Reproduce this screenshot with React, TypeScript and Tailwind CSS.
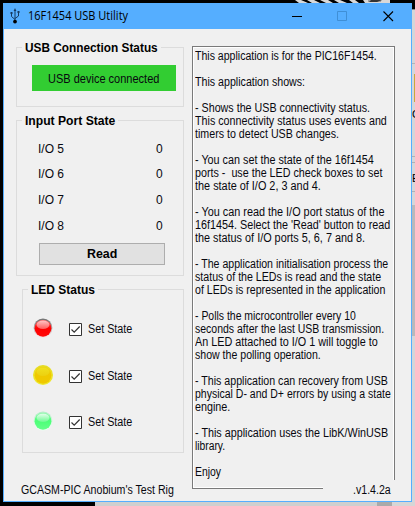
import { useLayoutEffect, useRef, useState } from 'react';
import type { ReactNode } from 'react';

/* One line of text condensed or widened to the given width. */
function Fit({ w, children }: { w: number; children: string }) {
  const ref = useRef<HTMLSpanElement>(null);
  const [scale, setScale] = useState(1);
  useLayoutEffect(() => {
    if (ref.current) setScale(w / ref.current.offsetWidth);
  }, [w]);
  return (
    <span className="block whitespace-pre" style={{ width: w }}>
      <span ref={ref} className="inline-block origin-left" style={{ transform: `scaleX(${scale})` }}>
        {children}
      </span>
    </span>
  );
}

function Group({ title, width, className, children }: { title: string; width: number; className: string; children: ReactNode }) {
  return (
    <section className={`relative border border-[#dcdcdc] ${className}`}>
      <h2 className="absolute -top-[8px] left-[5px] bg-[#f0f0f0] px-[3px] text-[12px] font-bold leading-[16px] text-black">
        <Fit w={width}>{title}</Fit>
      </h2>
      {children}
    </section>
  );
}

const lines: [string, number][] = [
  ['This application is for the PIC16F1454.', 182],
  ['', 0],
  ['This application shows:', 110],
  ['', 0],
  ['- Shows the USB connectivity status.', 175],
  ['This connectivity status uses events and', 192],
  ['timers to detect USB changes.', 144],
  ['', 0],
  ['- You can set the state of the 16f1454', 179],
  ['ports -  use the LED check boxes to set', 187],
  ['the state of I/O 2, 3 and 4.', 126],
  ['', 0],
  ['- You can read the I/O port status of the', 189],
  ["16f1454. Select the 'Read' button to read", 195],
  ['the status of I/O ports 5, 6, 7 and 8.', 170],
  ['', 0],
  ['- The application initialisation process the', 193],
  ['status of the LEDs is read and the state', 186],
  ['of LEDs is represented in the application', 190],
  ['', 0],
  ['- Polls the microcontroller every 10', 161],
  ['seconds after the last USB transmission.', 189],
  ['An LED attached to I/O 1 will toggle to', 183],
  ['show the polling operation.', 126],
  ['', 0],
  ['- This application can recovery from USB', 193],
  ['physical D- and D+ errors by using a state', 196],
  ['engine.', 35],
  ['', 0],
  ['- This application uses the LibK/WinUSB', 193],
  ['library.', 30],
  ['', 0],
  ['Enjoy', 26],
];

const leds = [
  { id: 'red', rim: '#777777', rim2: '#f6dcdc', top: '#ff5c5c', mid: '#ff0000', low: '#ff0808', shine: '#ffc4c4', r: 9.4 },
  { id: 'yellow', rim: '#e6dc22', rim2: '#eee82d', top: '#ecd010', mid: '#efc900', low: '#efc800', shine: '#f0e01e', r: 10 },
  { id: 'green', rim: '#b5eec7', rim2: '#ecfff2', top: '#6dfb92', mid: '#4dff78', low: '#65ff8a', shine: '#e4ffec', r: 9.4 },
];

function Led({ led }: { led: (typeof leds)[number] }) {
  return (
    <svg className="h-5 w-5" viewBox="0 0 20 20">
      <defs>
        <linearGradient id={`${led.id}-rim`} x1="0" y1="0" x2="0" y2="1">
          <stop offset="0.1" stopColor={led.rim} />
          <stop offset="0.9" stopColor={led.rim2} />
        </linearGradient>
        <linearGradient id={`${led.id}-body`} x1="0" y1="0" x2="0" y2="1">
          <stop offset="0" stopColor={led.top} />
          <stop offset="0.5" stopColor={led.mid} />
          <stop offset="1" stopColor={led.low} />
        </linearGradient>
        <linearGradient id={`${led.id}-shine`} x1="0" y1="0" x2="0" y2="1">
          <stop offset="0" stopColor={led.shine} />
          <stop offset="1" stopColor={led.top} />
        </linearGradient>
      </defs>
      <circle cx="10" cy="10" r={led.r} fill={`url(#${led.id}-rim)`} />
      <circle cx="10" cy="10.3" r="8.4" fill={`url(#${led.id}-body)`} />
      <ellipse cx="10" cy="6.800" rx="6.500" ry="4.200" fill={`url(#${led.id}-shine)`} />
    </svg>
  );
}

export default function App() {
  return (
    <div className="flex h-[506px] w-[415px] flex-col overflow-hidden bg-black font-['Liberation_Sans',Arial,sans-serif] text-[12px] text-[#08080f]">
      <div className="flex h-[3px] shrink-0">
        <svg className="ml-[295px] h-[3px] w-[96px]" viewBox="0 0 96 3">
          <path d="M0 0h6l7 3H4zM12 0h7l6 3h-8zM25 0h8l5 3h-7zM39 0h6l7 3h-8zM54 0h6l4 3h-6zM68 0h8l-2 2h8l5-2h8v3H70z" fill="#d8d8d8" />
          <path d="M73 .5h13v1H73z" fill="#666" />
        </svg>
      </div>
      <div className="flex h-[499px] shrink-0 pl-[3px]">
        <main className="flex h-[499px] w-[409px] flex-col border border-t-0 border-[#55aeff] bg-[#f0f0f0]">
          <header className="-mx-px flex h-[26px] shrink-0 items-center bg-[#55aeff] text-black">
            <svg className="ml-[7px] h-[18px] w-[10px]" viewBox="0 0 10 18" fill="none" stroke="#173b61" strokeWidth="1">
              <path d="M5 3v12M1.5 6v3.5L5 12.5M8.5 5.5V9L5 11.5" />
              <path d="M5 1L3.6 4h2.8z" fill="#173b61" stroke="none" />
              <path d="M.5 5h2v2h-2zM7.5 4h2v2h-2z" fill="#173b61" stroke="none" />
              <circle cx="5" cy="14.6" r="1.9" fill="#000" stroke="none" />
            </svg>
            <h1 className="ml-[8px] font-['Open_Sans','Noto_Sans',sans-serif] text-[12px] leading-[18px]">
              <Fit w={100}>16F1454 USB Utility</Fit>
            </h1>
            <svg className="ml-auto mr-[17px] h-[12px] w-[104px]" viewBox="0 0 104 12" fill="none">
              <path d="M1 6.5h10" stroke="#000" />
              <path d="M46.500 1.500h9v9h-9z" stroke="#3f8fd6" />
              <path d="M92.500 1.500l9.500 9.500M102 1.500l-9.500 9.500" stroke="#000" strokeWidth="1.100" />
            </svg>
          </header>
          <div className="flex pl-[12px] pt-[17px]">
            <div className="flex w-[168px] flex-col">
              <Group title="USB Connection Status" width={133} className="mt-px h-[60px] px-[15px] pt-[17px]">
                <div className="flex h-[26px] w-[144px] items-center bg-[#32cd32] pl-[16px] pt-px">
                  <Fit w={111}>USB device connected</Fit>
                </div>
              </Group>
              <Group title="Input Port State" width={90} className="mt-[13px] h-[156px]">
                <div className="flex flex-col pl-[21px] pr-[20px] pt-[15px]">
                  {['I/O 5', 'I/O 6', 'I/O 7', 'I/O 8'].map((name) => (
                    <div key={name} className="flex h-[25.600px] items-center justify-between">
                      <Fit w={26}>{name}</Fit>
                      <Fit w={7}>0</Fit>
                    </div>
                  ))}
                </div>
                <button className="ml-[22px] mt-[5px] flex h-[22px] w-[126px] items-center justify-center border border-[#adadad] bg-[#e1e1e1] font-bold text-black">
                  <Fit w={30}>Read</Fit>
                </button>
              </Group>
              <Group title="LED Status" width={64} className="ml-[6px] mt-[13px] h-[164px] pl-[10px] pt-[28px]">
                {leds.map((led) => (
                  <div key={led.id} className="flex h-[46.500px] items-start">
                    <Led led={led} />
                    <label className="ml-[16px] mt-[5px] flex h-[13px] items-center">
                      <svg className="h-[13px] w-[13px]" viewBox="0 0 13 13">
                        <path d="M.5.5h12v12H.5z" fill="#fff" stroke="#333" />
                        <path d="M2.500 6.500L5.200 9.200 10.700 3.500" fill="none" stroke="#333" strokeWidth="1.200" />
                      </svg>
                      <span className="-mt-px ml-[6px]">
                        <Fit w={44}>Set State</Fit>
                      </span>
                    </label>
                  </div>
                ))}
              </Group>
            </div>
            <div className="ml-[8px] h-[443px] w-[203px] border border-[#7a7a7a]">
              <div className="h-full border border-white pl-px pt-[2px] leading-[13px]">
                {lines.map(([text, w], i) => (
                  <div key={i} className="h-[13px]">
                    {text && <Fit w={w}>{text}</Fit>}
                  </div>
                ))}
              </div>
            </div>
          </div>
          <footer className="relative -mt-[9px] flex h-[20px] justify-between pl-[17px] leading-[20px]">
            <Fit w={153}>GCASM-PIC Anobium's Test Rig</Fit>
            <div className="mr-[2px] flex w-[86px] justify-end bg-[#f0f0f0] pr-[18px]">
              <Fit w={38}>.v1.4.2a</Fit>
            </div>
          </footer>
        </main>
        <aside className="flex w-[3px] flex-col bg-[#d6d6d8] text-[11px] text-black">
          <div className="h-[6px] bg-black" />
          <div className="h-px bg-[#888]" />
          <div className="h-[54px] border-b border-[#b5b5b8]" />
          <div className="mt-[10px] h-[28px] border-r border-[#c9a83c]" />
          <div className="mt-[5px] h-[14px] overflow-hidden leading-[14px]">C</div>
          <div className="mt-[35px] h-[7px] border-y border-[#b0b0b3]" />
          <div className="mt-[8px] h-[14px] overflow-hidden leading-[14px]">E</div>
          <div className="mt-[6px] h-[14px] border-t border-[#b0b0b3]" />
          <div className="h-[131px] bg-[#b9b9bb]" />
        </aside>
      </div>
      <div className="flex h-[4px] pl-[95px]">
        <div className="w-[282px] bg-[#cfcfcf]" />
        <div className="w-[15px] bg-[#aaaaaa]" />
        <div className="w-[23px] bg-[#d6d6d6]" />
      </div>
    </div>
  );
}
